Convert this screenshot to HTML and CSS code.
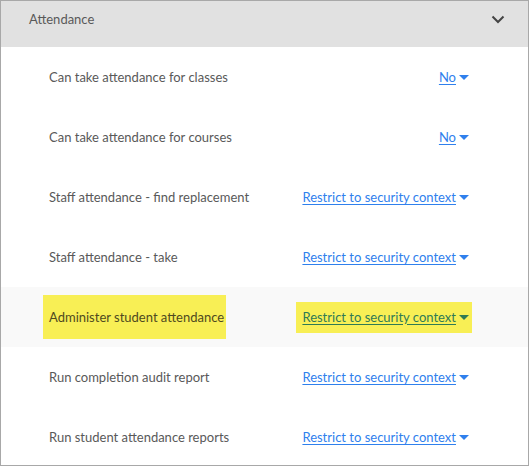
FILE: index.html
```html
<!DOCTYPE html>
<html>
<head>
<meta charset="utf-8">
<link rel="stylesheet" href="styles.css">
</head>
<body>
<div class="panel">
  <div class="header">
    <span class="title">Attendance</span>
    <svg class="chev" width="14" height="9" viewBox="0 0 14 9"><path d="M1.5 1.5 L7 7 L12.5 1.5" fill="none" stroke="#444" stroke-width="2"/></svg>
  </div>
  <div class="row">
    <span class="label">Can take attendance for classes</span>
    <span class="value"><a class="link">No</a><span class="caret"></span></span>
  </div>
  <div class="row">
    <span class="label">Can take attendance for courses</span>
    <span class="value"><a class="link">No</a><span class="caret"></span></span>
  </div>
  <div class="row">
    <span class="label">Staff attendance - find replacement</span>
    <span class="value"><a class="link">Restrict to security context</a><span class="caret"></span></span>
  </div>
  <div class="row">
    <span class="label">Staff attendance - take</span>
    <span class="value"><a class="link">Restrict to security context</a><span class="caret"></span></span>
  </div>
  <div class="row row-hover">
    <span class="label hl hl-label">Administer student attendance</span>
    <span class="value hl hl-value"><a class="link">Restrict to security context</a><span class="caret"></span></span>
  </div>
  <div class="row">
    <span class="label">Run completion audit report</span>
    <span class="value"><a class="link">Restrict to security context</a><span class="caret"></span></span>
  </div>
  <div class="row">
    <span class="label">Run student attendance reports</span>
    <span class="value"><a class="link">Restrict to security context</a><span class="caret"></span></span>
  </div>
</div>
</body>
</html>
```
FILE: styles.css
```css
html, body {
  margin: 0;
  padding: 0;
  background: #fff;
}
body {
  font-family: Lato, "Open Sans", sans-serif;
  font-size: 13px;
  color: #595959;
}
.panel {
  width: 527px;
  height: 464px;
  border: 1px solid #a8a8a8;
  overflow: hidden;
}
.header {
  height: 46px;
  background: #e1e1e1;
  display: flex;
  align-items: flex-start;
  justify-content: space-between;
  padding: 10px 23px 0 28px;
  box-sizing: border-box;
}
.title {
  font-size: 13px;
  color: #595959;
  line-height: 16px;
}
.chev {
  margin-top: 4px;
}
.row {
  height: 60px;
  display: flex;
  align-items: center;
  justify-content: space-between;
  padding: 0 59px 0 48px;
  box-sizing: border-box;
}
.row-hover {
  background: #f9f9f9;
}
.label {
  line-height: 16px;
}
.value {
  display: flex;
  align-items: center;
}
.link {
  color: #2f80ed;
  text-decoration: underline;
  text-underline-offset: 2px;
  cursor: pointer;
}
.caret {
  width: 0;
  height: 0;
  border-left: 5px solid transparent;
  border-right: 5px solid transparent;
  border-top: 5px solid #2f80ed;
  margin-left: 3px;
  margin-top: 1px;
}
.hl {
  background: #f8ef55;
}
.hl-label {
  margin-left: -6px;
  padding: 14px 2px 14px 6px;
  color: #4f4a20;
}
.hl-value {
  margin-right: -3px;
  padding: 7px 3px 8px 6px;
}
.hl-value .link {
  color: #2f7a54;
}
.hl-value .caret {
  border-top-color: #2f7a54;
}
```
